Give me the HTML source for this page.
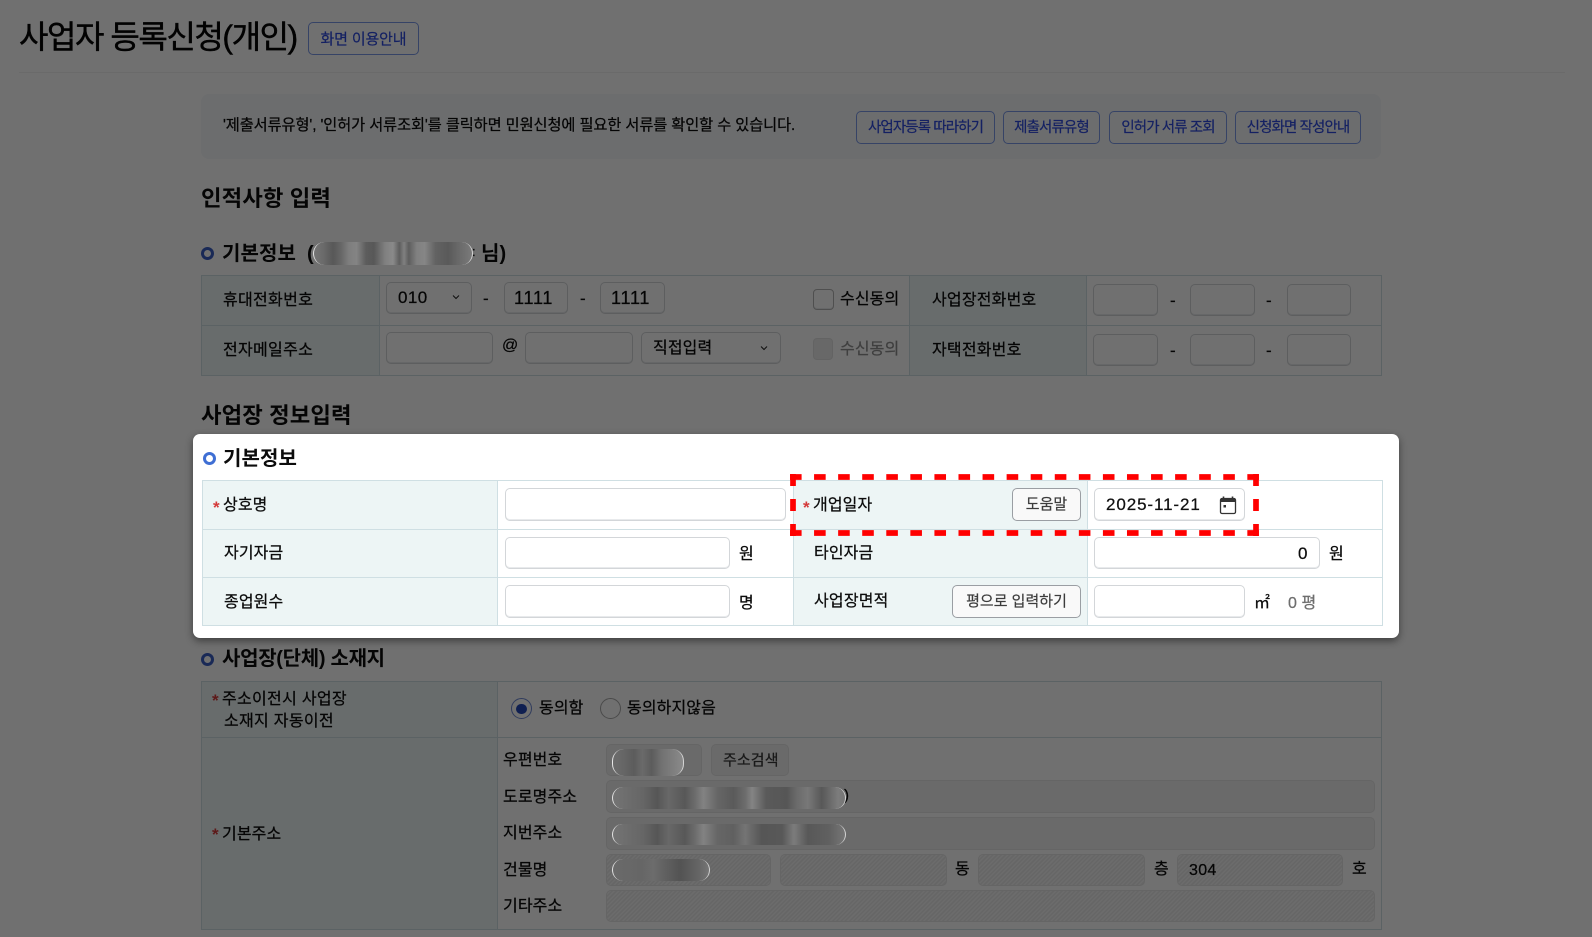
<!DOCTYPE html>
<html lang="ko"><head><meta charset="utf-8"><title>사업자 등록신청(개인)</title>
<style>
html,body{margin:0;padding:0;background:#fff}
body{width:1592px;height:937px;position:relative;overflow:hidden;font-family:"Liberation Sans","Noto Sans CJK KR",sans-serif;color:#0c0c0c;font-size:16px}
div,span{box-sizing:border-box}
.a{position:absolute}
.t{position:absolute;white-space:nowrap;line-height:20px;height:20px;letter-spacing:.1px;-webkit-text-stroke:.25px currentColor}
.b{font-weight:700;-webkit-text-stroke:0}
.i{position:absolute;background:#fff;border:1px solid #d3d6d9;border-radius:5px;box-shadow:inset 0 -1px 0 #e8eaec}
.nb{position:absolute;border:1px solid #7c9ae8;border-radius:5px;color:#2f4be0;font-size:14.500px;letter-spacing:-.9px;text-align:center;white-space:nowrap;line-height:33px;height:33px;-webkit-text-stroke:.2px currentColor}
.g{position:absolute;border:1px solid #9a9ea3;border-radius:5px;background:#f9f9f9;color:#3d3d3d;font-size:15px;text-align:center;white-space:nowrap;line-height:31px;height:33px;-webkit-text-stroke:.2px currentColor}
.ro{position:absolute;background:#f1f1f1;border:1px solid #e6e6e6;border-radius:5px}
.h{position:absolute;border:1px solid #e6e6e6;border-radius:5px;background:repeating-linear-gradient(135deg,#e9e9e9 0,#e9e9e9 1.500px,#f6f6f6 1.500px,#f6f6f6 3px)}
.line{position:absolute;background:#cfdfe3}
.th{position:absolute;background:#edf5f5}
.bul{position:absolute;width:13px;height:13px;border:3px solid #3a5fc4;border-radius:50%;background:#fff}
.pill{position:absolute;border-radius:12px;border-left:1.200px solid rgba(255,255,255,.8);border-right:1px solid rgba(255,255,255,.7)}
.star{position:absolute;color:#d43a3a;font-size:17px;font-weight:700;line-height:20px;height:20px}
.chev{position:absolute}
</style></head><body>

<!-- page -->
<div class="t" style="left:19px;top:21px;font-size:32px;line-height:32px;height:32px;letter-spacing:-1.450px;color:#050505;-webkit-text-stroke:.45px #050505">사업자 등록신청(개인)</div>
<div class="nb" style="left:308px;top:22px;width:111px;font-size:15px;letter-spacing:-.15px">화면 이용안내</div>
<div class="a" style="left:19px;top:72px;width:1546px;height:1px;background:#f1f1f1"></div>

<div class="a" style="left:201px;top:94px;width:1180px;height:65px;background:#f5f7fa;border-radius:8px"></div>
<div class="t" style="left:223px;top:116px;font-size:15.250px;letter-spacing:-.1px">'제출서류유형', '인허가 서류조회'를 클릭하면 민원신청에 필요한 서류를 확인할 수 있습니다.</div>
<div class="nb" style="left:856px;top:111px;width:139px">사업자등록 따라하기</div>
<div class="nb" style="left:1003px;top:111px;width:97px">제출서류유형</div>
<div class="nb" style="left:1109px;top:111px;width:118px">인허가 서류 조회</div>
<div class="nb" style="left:1235px;top:111px;width:126px">신청화면 작성안내</div>

<div class="t b" style="left:201px;top:189px;font-size:22.300px">인적사항 입력</div>

<div class="bul" style="left:201px;top:247px"></div>
<div class="t b" style="left:222px;top:244px;font-size:20px">기본정보</div>
<div class="t b" style="left:307px;top:244px;font-size:20px">(</div>
<div class="t b" style="left:481px;top:244px;font-size:20px">님)</div>
<div class="t" style="left:472px;top:242px;font-size:13px">:</div>

<!-- table 1 -->
<div class="a" style="left:201px;top:275px;width:1181px;height:101px;border:1px solid #cfdfe3"></div>
<div class="th" style="left:202px;top:276px;width:177px;height:99px"></div>
<div class="th" style="left:909px;top:276px;width:177px;height:99px"></div>
<div class="line" style="left:202px;top:325px;width:1179px;height:1px"></div>
<div class="line" style="left:379px;top:276px;width:1px;height:99px"></div>
<div class="line" style="left:909px;top:276px;width:1px;height:99px"></div>
<div class="line" style="left:1086px;top:276px;width:1px;height:99px"></div>
<div class="t" style="left:223px;top:291px;letter-spacing:.3px">휴대전화번호</div>
<div class="t" style="left:223px;top:341px;letter-spacing:.3px">전자메일주소</div>
<div class="t" style="left:932px;top:291px;letter-spacing:.2px">사업장전화번호</div>
<div class="t" style="left:932px;top:341px;letter-spacing:.2px">자택전화번호</div>

<div class="i" style="left:386px;top:282px;width:86px;height:32px"></div>
<div class="t" style="left:398px;top:288px;font-size:17px;letter-spacing:.4px">010</div>
<svg class="chev" style="left:451px;top:293px" width="10" height="8" viewBox="0 0 10 8"><path d="M2 2.500l3 3 3-3" fill="none" stroke="#222" stroke-width="1"/></svg>
<div class="t" style="left:483px;top:289px;font-size:17px">-</div>
<div class="i" style="left:504px;top:282px;width:64px;height:32px"></div>
<div class="t" style="left:514px;top:288px;font-size:18px;letter-spacing:.8px">1111</div>
<div class="t" style="left:580px;top:289px;font-size:17px">-</div>
<div class="i" style="left:600px;top:282px;width:65px;height:32px"></div>
<div class="t" style="left:611px;top:288px;font-size:18px;letter-spacing:.8px">1111</div>
<div class="i" style="left:813px;top:289px;width:21px;height:21px;border-radius:4px;border-color:#b5b5b5"></div>
<div class="t" style="left:840px;top:290px">수신동의</div>

<div class="i" style="left:386px;top:332px;width:107px;height:32px"></div>
<div class="t" style="left:502px;top:336px;font-size:16px">@</div>
<div class="i" style="left:525px;top:332px;width:108px;height:32px"></div>
<div class="i" style="left:641px;top:332px;width:140px;height:32px"></div>
<div class="t" style="left:653px;top:339px">직접입력</div>
<svg class="chev" style="left:759px;top:344px" width="10" height="8" viewBox="0 0 10 8"><path d="M2 2.500l3 3 3-3" fill="none" stroke="#222" stroke-width="1"/></svg>
<div class="a" style="left:813px;top:338px;width:20px;height:22px;border-radius:4px;background:#ececec;border:1px solid #e2e2e2"></div>
<div class="t" style="left:840px;top:340px;color:#8f8f8f">수신동의</div>

<div class="i" style="left:1093px;top:284px;width:65px;height:32px"></div>
<div class="t" style="left:1170px;top:291px;font-size:17px">-</div>
<div class="i" style="left:1190px;top:284px;width:65px;height:32px"></div>
<div class="t" style="left:1266px;top:291px;font-size:17px">-</div>
<div class="i" style="left:1287px;top:284px;width:64px;height:32px"></div>
<div class="i" style="left:1093px;top:334px;width:65px;height:32px"></div>
<div class="t" style="left:1170px;top:341px;font-size:17px">-</div>
<div class="i" style="left:1190px;top:334px;width:65px;height:32px"></div>
<div class="t" style="left:1266px;top:341px;font-size:17px">-</div>
<div class="i" style="left:1287px;top:334px;width:64px;height:32px"></div>

<div class="t b" style="left:201px;top:406px;font-size:22.300px">사업장 정보입력</div>

<!-- address section -->
<div class="bul" style="left:201px;top:653px"></div>
<div class="t b" style="left:222px;top:649px;font-size:20px;letter-spacing:-.3px">사업장(단체) 소재지</div>
<div class="a" style="left:201px;top:681px;width:1181px;height:249px;border:1px solid #cfdfe3"></div>
<div class="th" style="left:202px;top:682px;width:295px;height:247px"></div>
<div class="line" style="left:497px;top:682px;width:1px;height:247px"></div>
<div class="line" style="left:202px;top:737px;width:1179px;height:1px"></div>
<div class="star" style="left:212px;top:691px">*</div>
<div class="t" style="left:222px;top:690px;letter-spacing:.3px">주소이전시 사업장</div>
<div class="t" style="left:224px;top:712px;letter-spacing:.3px">소재지 자동이전</div>
<div class="star" style="left:212px;top:825px">*</div>
<div class="t" style="left:222px;top:825px">기본주소</div>

<div class="a" style="left:511px;top:698px;width:21px;height:21px;border:1px solid #6f88d4;border-radius:50%;background:#fff"></div>
<div class="a" style="left:516px;top:703.500px;width:10.500px;height:10.500px;border-radius:50%;background:#2347b8"></div>
<div class="t" style="left:539px;top:699px">동의함</div>
<div class="a" style="left:600px;top:698px;width:21px;height:21px;border:1px solid #a9a9a9;border-radius:50%;background:#fff"></div>
<div class="t" style="left:627px;top:699px">동의하지않음</div>

<div class="t" style="left:503px;top:751px">우편번호</div>
<div class="ro" style="left:606px;top:744px;width:96px;height:32px"></div>
<div class="ro" style="left:711px;top:744px;width:78px;height:32px"></div>
<div class="t" style="left:723px;top:751px;color:#3a3a3a;font-size:15px">주소검색</div>

<div class="t" style="left:503px;top:788px">도로명주소</div>
<div class="ro" style="left:606px;top:780px;width:769px;height:33px"></div>
<div class="t" style="left:844px;top:786px;font-size:15px">)</div>
<div class="t" style="left:503px;top:824px">지번주소</div>
<div class="ro" style="left:606px;top:817px;width:769px;height:33px"></div>

<div class="t" style="left:503px;top:861px">건물명</div>
<div class="h" style="left:606px;top:854px;width:165px;height:32px"></div>
<div class="h" style="left:780px;top:854px;width:167px;height:32px"></div>
<div class="t" style="left:955px;top:860px">동</div>
<div class="h" style="left:978px;top:854px;width:167px;height:32px"></div>
<div class="t" style="left:1154px;top:860px">층</div>
<div class="h" style="left:1177px;top:854px;width:166px;height:32px"></div>
<div class="t" style="left:1189px;top:861px;font-size:16px;letter-spacing:.3px">304</div>
<div class="t" style="left:1352px;top:860px">호</div>
<div class="t" style="left:503px;top:897px">기타주소</div>
<div class="h" style="left:606px;top:890px;width:769px;height:32px"></div>

<!-- overlay -->
<div class="a" style="left:0;top:0;width:1592px;height:937px;background:rgba(0,0,0,.56)"></div>

<!-- blurred masks -->
<div class="pill" style="left:313px;top:242px;width:160px;height:23px;background:linear-gradient(90deg,#757575 0,#6a6a6a 6%,#585858 12%,#666 17%,#7e7e7e 22%,#848484 27%,#5c5c5c 33%,#585858 38%,#808080 45%,#8a8a8a 50%,#5e5e5e 54%,#808080 57%,#5e5e5e 60%,#808080 65%,#868686 70%,#626262 77%,#5a5a5a 85%,#6a6a6a 92%,#7a7a7a 100%)"></div>
<div class="pill" style="left:612px;top:749px;width:72px;height:27px;background:linear-gradient(90deg,#6c6c6c 0,#666 15%,#5c5c5c 30%,#6a6a6a 42%,#5c5c5c 55%,#727272 70%,#8a8a8a 100%)"></div>
<div class="pill" style="left:612px;top:787px;width:234px;height:22px;background:linear-gradient(90deg,#747474 0,#6c6c6c 7%,#666 13%,#565656 19%,#686868 24%,#585858 31%,#6a6a6a 35%,#828282 39%,#666 45%,#5a5a5a 52%,#6c6c6c 57%,#848484 60%,#5a5a5a 66%,#565656 75%,#6a6a6a 79%,#787878 84%,#585858 90%,#7c7c7c 97%,#767676 100%)"></div>
<div class="pill" style="left:612px;top:824px;width:234px;height:21px;background:linear-gradient(90deg,#747474 0,#6c6c6c 7%,#666 13%,#565656 19%,#686868 24%,#585858 31%,#6a6a6a 35%,#828282 39%,#666 45%,#606060 52%,#747474 57%,#565656 64%,#585858 73%,#7c7c7c 78%,#585858 84%,#606060 93%,#767676 100%)"></div>
<div class="pill" style="left:612px;top:859px;width:98px;height:22px;background:linear-gradient(90deg,#6a6a6a 0,#666 30%,#6c6c6c 42%,#606060 55%,#535353 70%,#666 90%,#767676 100%)"></div>

<!-- highlight panel -->
<div class="a" style="left:193px;top:434px;width:1206px;height:204px;background:#fff;border-radius:7px;box-shadow:0 3px 8px rgba(0,0,0,.45)"></div>
<div class="bul" style="left:203px;top:452px;border-color:#3f6fd4"></div>
<div class="t b" style="left:223px;top:449px;font-size:20px">기본정보</div>

<div class="th" style="left:202px;top:480px;width:296px;height:146px"></div>
<div class="th" style="left:793px;top:480px;width:294px;height:146px"></div>
<div class="a" style="left:202px;top:480px;width:1181px;height:146px;border:1px solid #cfdfe3"></div>
<div class="line" style="left:203px;top:529px;width:1179px;height:1px"></div>
<div class="line" style="left:203px;top:577px;width:1179px;height:1px"></div>
<div class="line" style="left:497px;top:481px;width:1px;height:144px"></div>
<div class="line" style="left:793px;top:481px;width:1px;height:144px"></div>
<div class="line" style="left:1087px;top:481px;width:1px;height:144px"></div>

<div class="star" style="left:213px;top:498px">*</div>
<div class="t" style="left:223px;top:496px">상호명</div>
<div class="t" style="left:224px;top:544px">자기자금</div>
<div class="t" style="left:224px;top:593px">종업원수</div>
<div class="i" style="left:505px;top:488px;width:281px;height:33px"></div>
<div class="i" style="left:505px;top:537px;width:225px;height:32px"></div>
<div class="t" style="left:739px;top:545px">원</div>
<div class="i" style="left:505px;top:585px;width:225px;height:33px"></div>
<div class="t" style="left:739px;top:594px">명</div>

<div class="star" style="left:803px;top:498px">*</div>
<div class="t" style="left:813px;top:496px">개업일자</div>
<div class="g" style="left:1012px;top:488px;width:69px">도움말</div>
<div class="i" style="left:1094px;top:488px;width:151px;height:33px"></div>
<div class="t" style="left:1106px;top:495px;font-size:17px;letter-spacing:.9px;color:#111">2025-11-21</div>
<svg class="a" style="left:1218px;top:495px" width="20" height="20" viewBox="0 0 20 20"><path d="M5.500 1.500v3M14.500 1.500v3" fill="none" stroke="#333" stroke-width="1.600"/><rect x="2.500" y="3.500" width="15" height="15" rx="1.500" fill="none" stroke="#333" stroke-width="1.300"/><rect x="2.500" y="3.500" width="15" height="3.500" fill="#333"/><rect x="5.500" y="10" width="2.500" height="2.500" fill="#333"/></svg>

<div class="t" style="left:814px;top:544px">타인자금</div>
<div class="i" style="left:1094px;top:537px;width:226px;height:32px"></div>
<div class="t" style="left:1298px;top:544px;font-size:17px">0</div>
<div class="t" style="left:1329px;top:545px">원</div>

<div class="t" style="left:814px;top:592px;letter-spacing:.2px">사업장면적</div>
<div class="g" style="left:952px;top:585px;width:129px">평으로 입력하기</div>
<div class="i" style="left:1094px;top:585px;width:151px;height:33px"></div>
<div class="t" style="left:1254px;top:594px">㎡</div>
<div class="t" style="left:1288px;top:594px;color:#6e6e6e">0 평</div>

<!-- red dashed -->
<svg class="a" style="left:788px;top:472px" width="474" height="66" viewBox="788 472 474 66">
<g stroke="#f00" stroke-width="5.700" fill="none">
<path d="M790 477h469" stroke-dasharray="11.600 12.470"/>
<path d="M790 533h469" stroke-dasharray="11.600 12.470"/>
<path d="M793 474v62" stroke-dasharray="12 13"/>
<path d="M1256 474v62" stroke-dasharray="12 13"/>
</g></svg>

</body></html>
